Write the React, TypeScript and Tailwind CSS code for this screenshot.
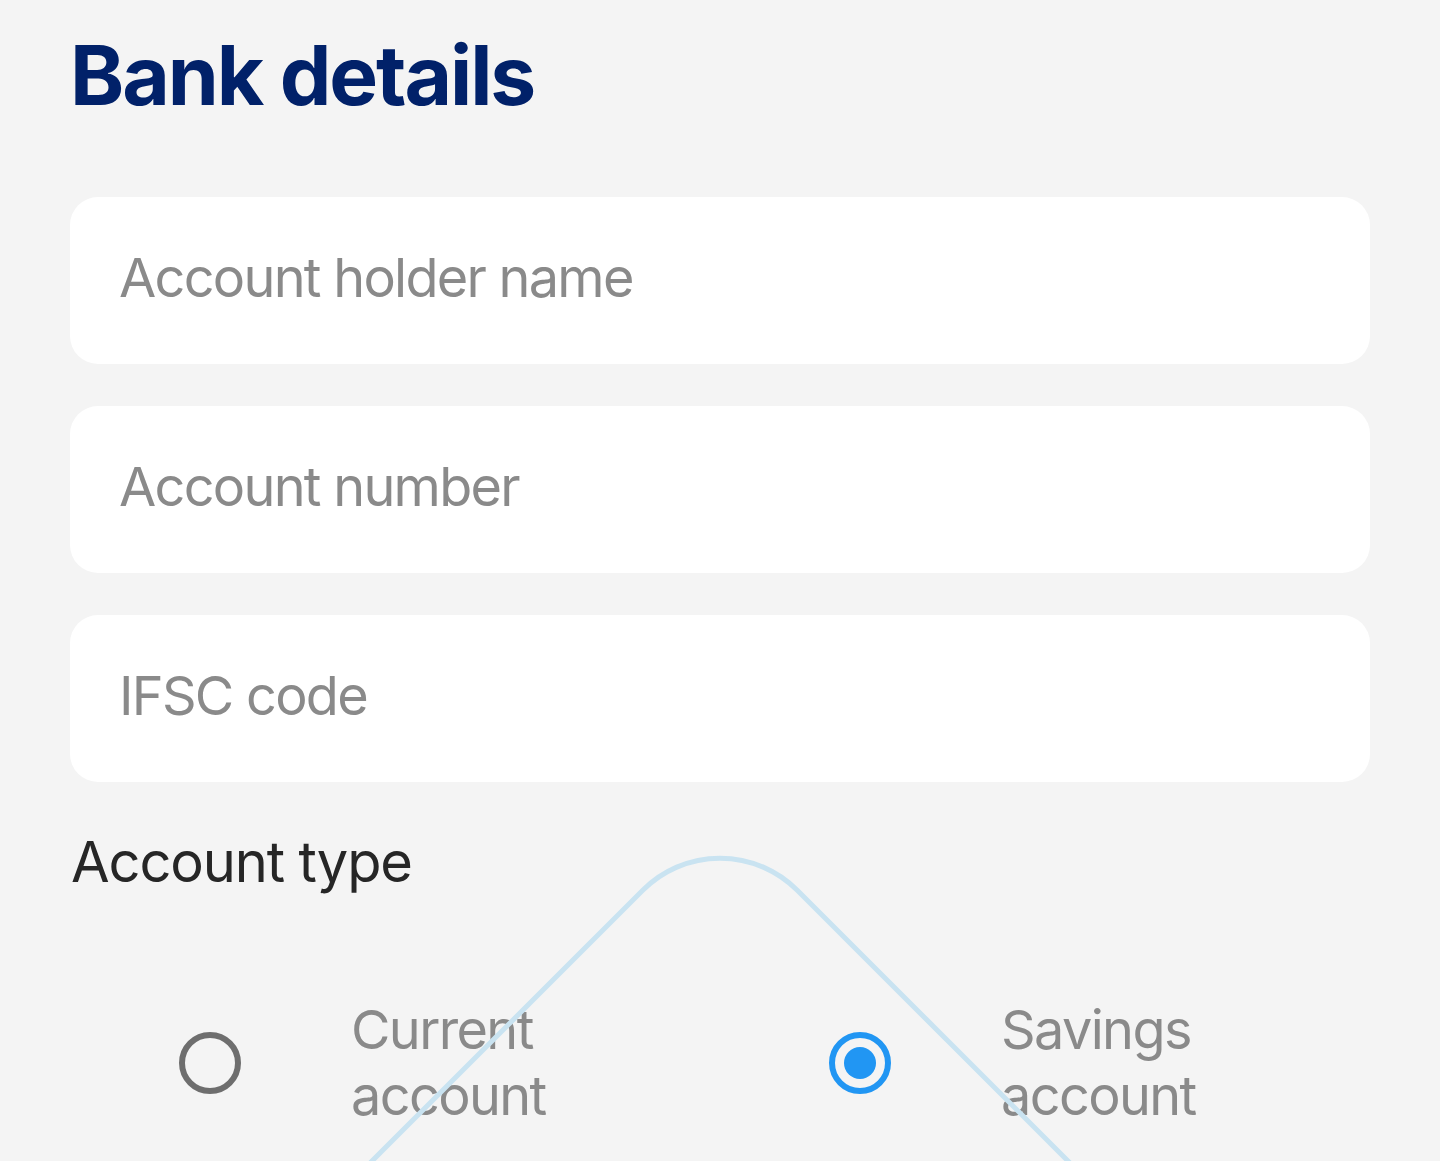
import { useState } from 'react'

const fields = ['Account holder name', 'Account number', 'IFSC code']

const accountTypes = [
  { id: 'current', label: 'Current account' },
  { id: 'savings', label: 'Savings account' },
]

const Radio = ({ checked }: { checked: boolean }) => (
  <span
    className={`flex h-[62px] w-[62px] shrink-0 items-center justify-center rounded-full border-[6px] ${
      checked ? 'border-[#2196f3]' : 'border-[#6e6e6e]'
    }`}
  >
    {checked && <span className="h-[32px] w-[32px] rounded-full bg-[#2196f3]" />}
  </span>
)

export default function App() {
  const [accountType, setAccountType] = useState('savings')

  return (
    <div className="relative min-h-screen overflow-hidden bg-[#f4f4f4] font-['Inter','Liberation_Sans',sans-serif]">
      <div className="px-[70px] pt-[26px]">
        <h1 className="text-[82px] font-bold leading-[100px] tracking-[-0.025em] text-[#012169]">
          Bank details
        </h1>

        <form className="mt-[71px] flex flex-col gap-[42px]">
          {fields.map((field) => (
            <input
              key={field}
              type="text"
              placeholder={field}
              className="h-[167px] w-full rounded-[28px] bg-white px-[49px] pb-[6px] text-[54px] tracking-[-0.032em] text-[#333] outline-none placeholder:text-[#8a8a8a]"
            />
          ))}
        </form>

        <h2 className="mt-[46px] pl-[1px] text-[56px] leading-[68px] tracking-[-0.02em] text-[#262626]">
          Account type
        </h2>

        <div className="mt-[101px] grid grid-cols-2">
          {accountTypes.map((type) => (
            <label
              key={type.id}
              className="flex cursor-pointer items-center pl-[109px]"
              onClick={() => setAccountType(type.id)}
            >
              <Radio checked={accountType === type.id} />
              <span className="ml-[110px] w-[260px] text-[54px] leading-[66px] tracking-[-0.03em] text-[#8a8a8a]">
                {type.label}
              </span>
            </label>
          ))}
        </div>
      </div>

      <svg
        className="pointer-events-none absolute left-0 top-0"
        width="1440"
        height="1161"
        viewBox="0 0 1440 1161"
        fill="none"
      >
        <path
          d="M343 1190 L643 890 A109 109 0 0 1 797 890 L1097 1190"
          stroke="#c9e3f1"
          strokeWidth="5"
          strokeLinecap="round"
        />
      </svg>
    </div>
  )
}
